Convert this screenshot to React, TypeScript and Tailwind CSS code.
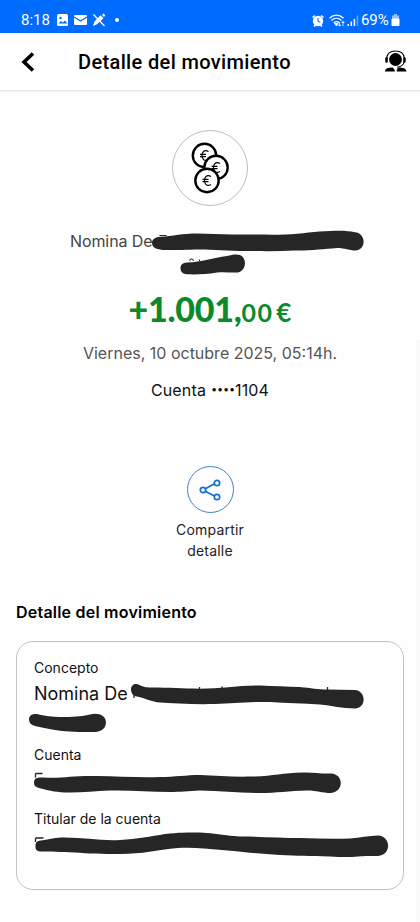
import type { ReactNode } from 'react'

const INK = '#262626'

// Marker strokes share the page's coordinates, so each group gets its own viewBox
function Marker({ top, height, className, children }: { top: number; height: number; className: string; children: ReactNode }) {
  return (
    <svg
      className={`absolute w-[420px] max-w-none pointer-events-none ${className}`}
      height={height}
      viewBox={`0 ${top} 420 ${height}`}
      fill={INK}
      aria-hidden="true"
    >
      {children}
    </svg>
  )
}

function StatusBar() {
  return (
    <div className="flex h-[33px] items-center bg-[#006bff] pt-[7px] pl-[21px] pr-5 font-[Roboto] text-[15px] text-white">
      <span className="w-[29px] leading-none">8:18</span>
      <svg className="ml-[6px]" width="62" height="14" viewBox="0 0 62 14" fill="none">
        <rect x="1" y="1" width="11" height="12" rx="1.5" fill="white" />
        <path d="M2.5 10.5 5 8l2 1.5 2-2 2.5 3z" fill="#006bff" />
        <circle cx="4.5" cy="5" r="1.2" fill="#006bff" />
        <rect x="18" y="2" width="13" height="10" rx="1" fill="white" />
        <path d="m18 4 6.5 4L31 4" stroke="#006bff" strokeWidth="1.2" />
        <path d="M37.5 1.5 48.5 13" stroke="white" strokeWidth="1.3" />
        <path d="m37 13 1.5-4.5 6-6.2 3 3-6.5 6z" fill="white" />
        <path d="m46 2 1.5-1.5 1.8 1.8L48 4z" fill="white" />
      </svg>
      <span className="-ml-[3px] size-1 rounded-full bg-white" />
      <svg className="ml-auto" width="50" height="15" viewBox="0 0 50 15" fill="none">
        <circle cx="7" cy="8" r="5.2" fill="white" />
        <path d="M1.5 4.5 4 2.5M12.5 4.5 10 2.5M3 13.5l1.5-1.5M11 13.5l-1.5-1.5" stroke="white" strokeWidth="1.6" />
        <path d="M7 5v3.2l2.3 1" stroke="#006bff" strokeWidth="1.1" />
        <path d="M18.5 5.2c4-4 10-4 14 0M20.5 7.5c3-2.8 7-2.8 10 0M22.8 9.8c1.7-1.5 3.8-1.5 5.3 0" stroke="white" strokeWidth="1.3" />
        <path d="m23.5 10.5 2 2.5 1.5-2.5zM28.5 9v4M27.2 11.8l1.3 1.4 1.3-1.4M32 13V8.5M30.8 9.7 32 8.4l1.3 1.3" fill="white" stroke="white" strokeWidth=".8" />
        <path d="M37.2 13v-2M40.3 13V8.5M43.4 13V6" stroke="white" strokeWidth="1.5" />
        <path d="M46.4 13V2.5" stroke="white" strokeOpacity=".4" strokeWidth="1.5" />
      </svg>
      <span className="w-[30px] leading-none tracking-[-0.1px]">69%</span>
      <svg width="9" height="14" viewBox="0 0 9 14">
        <path d="M3 1h3v1.5h2V6H1V2.5h2z" fill="#94c2ff" />
        <rect x=".5" y="5.5" width="8" height="7.5" rx="1" fill="white" />
      </svg>
    </div>
  )
}

function AgentIcon() {
  return (
    <svg width="24" height="23" viewBox="0 0 24 23" fill="none">
      <circle cx="11.5" cy="9.5" r="6.4" fill="black" />
      <path d="M2.5 8.5C3 3.5 6.5 1 11.5 1s8.5 2.5 9 7.5" stroke="black" strokeWidth="1.1" />
      <rect x="1.3" y="7.2" width="2.5" height="5.5" rx="1" fill="black" />
      <rect x="19.2" y="7.2" width="2.5" height="5.5" rx="1" fill="black" />
      <path d="M20 12c-.5 3-3 4.5-6 5v2" stroke="black" strokeWidth="1.1" />
      <path d="M.8 21.5c.4-2.7 2.5-3.5 6-3.9h2l2 2.4v1.5zM22.5 21.5c-.4-2.7-2.5-3.5-6-3.9h-1.5L12.7 20v1.5z" fill="black" />
    </svg>
  )
}

function Header() {
  return (
    <header className="flex h-[58px] items-center border-b border-[#e6e6e6] bg-white pl-[21px] pr-3 shadow-[0_1px_2px_rgba(0,0,0,0.06)]">
      <svg width="14" height="20" viewBox="0 0 14 20" fill="none">
        <path d="M12 1.5 3 10l9 8.5" stroke="black" strokeWidth="3.6" />
      </svg>
      <h1 className="ml-[43px] pt-px font-[Roboto] text-[20px] font-medium tracking-[0.36px] whitespace-nowrap text-black">Detalle del movimiento</h1>
      <div className="ml-auto">
        <AgentIcon />
      </div>
    </header>
  )
}

function Coin({ x, y }: { x: number; y: number }) {
  return (
    <>
      <circle cx={x} cy={y} r="11.7" fill="white" stroke="black" strokeWidth="2.4" />
      <path
        d={`M${x + 4} ${y - 4}c-4-2.5-6.5.5-6.5 4s2.5 6.5 6.5 4M${x - 4.5} ${y - 1.2}h6M${x - 4.5} ${y + 1.2}h6`}
        stroke="black"
        strokeWidth="1.2"
        fill="none"
      />
    </>
  )
}

function Summary() {
  return (
    <section className="relative flex flex-col items-center pt-[39px]">
      <div className="flex size-[76px] items-center justify-center rounded-full border border-[#bdbdbd]">
        <svg width="74" height="74" viewBox="0 0 74 74">
          <Coin x={31.5} y={24.5} />
          <Coin x={43} y={36.5} />
          <Coin x={34} y={49.5} />
        </svg>
      </div>
      <p className="mt-[24px] h-[46px] w-[280px] text-[16px] leading-[23px] tracking-[-0.1px] text-[#444]">Nomina De</p>
      <Marker top={225} height={55} className="left-0 top-[134px]">
        <path d="M152 243C152 239 156 237 160 236.8C173 236 183 233.5 197 233.5C210 233.5 222 234.7 235 234.5C252 234.2 268 235 285 234.5C302 234 316 231 330 231C340 230.3 348 230.6 355 232.2C366 233 367 250 355 250.5C350 250.5 345 248 337 248C323 249 312 250.7 295 250.5C277 251.5 258 251 240 251C222 250.5 208 249.5 195 249.5C182 250 174 250 165 250C158 250 152 248 152 243Z" />
        <path d="M180.5 268.5C180.5 264 183 263 187 262.5C202 262 213 258 227 256C232 254.5 237 254 240 255C247 258 247 270 238 272.5C232 273 225 271.5 217 272.5C206 274.5 196 274.5 187 274.3C183 274 180.5 272 180.5 268.5Z" />
        <path d="M159.5 235.5h7M189.5 261l1-2h2l1 2M199.5 259.5v1.5" fill="none" stroke={INK} />
      </Marker>
      <p className="mt-[13px] flex h-[45px] items-baseline font-[Lato] font-bold text-[#0a8a2b]">
        <span className="text-[34px] leading-[40px] font-black tracking-[-0.25px]">+1.001,</span>
        <span className="text-[25px] tracking-[1.4px]">00</span>
        <span className="ml-[3px] text-[26px]">€</span>
      </p>
      <p className="mt-[7px] text-[16px] leading-[24px] text-[#555]">Viernes, 10 octubre 2025, 05:14h.</p>
      <p className="mt-[13px] flex text-[16px] leading-[24px] tracking-[0.15px] text-[#111]">
        Cuenta <span className="ml-[5px] text-[11px] leading-[23px] tracking-[-0.2px]">••••</span>1104
      </p>
    </section>
  )
}

function ShareAction() {
  return (
    <button className="mx-auto mt-[64px] flex w-[100px] flex-col items-center">
      <span className="flex size-[47px] items-center justify-center rounded-full border border-[#3c83d2]">
        <svg width="24" height="24" viewBox="0 0 24 24" fill="none" stroke="#146fdc" strokeWidth="1.7">
          <path d="m7.3 10.8 9.2-5.1M7.3 13.2l9.2 4.8" />
          <circle cx="5" cy="12" r="2.7" />
          <circle cx="19" cy="5" r="2.7" />
          <circle cx="19" cy="19" r="2.7" />
        </svg>
      </span>
      <span className="mt-[6px] text-center text-[14px] leading-[21px] tracking-[0.2px] text-[#222]">
        Compartir
        <br />
        detalle
      </span>
    </button>
  )
}

function DetailCard() {
  return (
    <section className="px-4">
      <h2 className="mt-[39px] text-[16px] leading-[24px] font-semibold tracking-[0.22px] text-black">Detalle del movimiento</h2>
      <dl className="relative mt-[17px] h-[249px] w-[388px] rounded-[17px] border border-[#c2c2c2] pt-[15px] pl-[17px] text-[#111]">
        <dt className="text-[14px] leading-[21px]">Concepto</dt>
        <dd className="h-[55px] pt-[3px] text-[18px] leading-[26px]">Nomina De</dd>
        <dt className="mt-[11px] text-[14px] leading-[21px]">Cuenta</dt>
        <dd className="h-[32px]" />
        <dt className="mt-[11px] text-[14px] leading-[21px]">Titular de la cuenta</dt>
        <dd className="h-[32px]" />
        <Marker top={675} height={190} className="-left-[17px] top-[33px]">
          <path d="M131 689.5C131 685 135 683 139 684.7C143 686.5 145 687.5 151 687.5C169 687.5 183 688.5 200 688.7C221 688.5 240 685.5 260 685.5C274 686 287 686.5 300 687C311 688 318 689.5 327 689.5L355 690C366 690.5 367 708 355 708.5C342 708.5 332 705.5 320 704.5C303 703.5 287 703 270 702C246 701.5 233 703.5 215 704C194 704.5 174 703.5 157 702.2C150 701 144 698 137 696.5C133 696 131 693 131 689.5Z" />
          <path d="M29 719.5C29 715.5 32 713.7 37 714C45 716 53 717.2 65 717C76 717 84 716 90 714.5C98 712.5 106 715 106 723C105 731 98 732.5 90 732C81 732 69 732 55 730C47 729 41 727 35 726C31 725 29 723 29 719.5Z" />
          <path d="M34 783C34 778 37 777.3 43 777.5C61 778.5 72 776 90 776C114 775.5 136 778 160 777C175 777 186 775 200 775C217 776 234 777 253 776.5C274 776 282 773 303 772.5C312 772 321 774 331 773.5C344 774 344 792 331 793C322 793 317 790.5 307 790.5C289 791 276 793 260 793C239 793 221 791 200 790.5C188 791 180 792 170 792C149 792 131 790 110 790.5C94 791 80 793 65 792.5C54 792 47 790 39 788C36 787 34 786 34 783Z" />
          <path d="M35.5 846C35.5 842 37 841 41 840.5C50 839 55 837.5 65 837.5C84 837.5 101 841 120 840C137 839 151 836.5 165 834C178 832.5 188 832.5 200 832.5C214 833 227 836 240 836.5C259 836.5 281 838 300 838C317 838.5 334 839 350 838.5C360 838 369 835.5 378 835.5C391 836 392 855 378 856C370 856 366 855.5 358 856.5C348 857.5 341 857 330 856.5C309 856 298 856 280 855C258 854 241 851.5 222 850C206 848.5 192 847 178 848C156 850 143 854 120 854C103 854 87 853.5 75 852.5C60 852 51 851.5 40 851.5C36 851 35.5 849 35.5 846Z" />
          {/* bits of the covered lines that the marker did not reach */}
          <path
            d="M134 690v8M199.5 687v2M222 686.5v2M327.5 687v3M35.5 773.5v4M35.5 773.5h7M35.5 838v4M35.5 838h8"
            fill="none"
            stroke={INK}
            strokeWidth="1.3"
          />
        </Marker>
      </dl>
    </section>
  )
}

export default function App() {
  return (
    <div className="relative h-[922px] w-[420px] overflow-hidden bg-[#fefefe] font-[Inter,sans-serif]">
      <StatusBar />
      <Header />
      <main>
        <Summary />
        <ShareAction />
        <DetailCard />
      </main>
      <div className="absolute right-0 bottom-0 h-[582px] w-1 bg-[#f9f9f9]" />
    </div>
  )
}
